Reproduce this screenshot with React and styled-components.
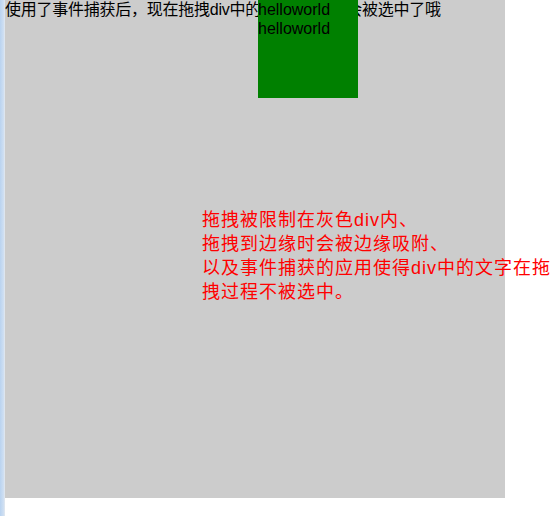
import React from 'react';
import styled, { createGlobalStyle } from 'styled-components';

const GlobalStyle = createGlobalStyle`
  html, body {
    margin: 0;
    padding: 0;
    background: #ffffff;
  }
  body {
    font-family: "Liberation Sans", "Noto Sans CJK SC", sans-serif;
    font-size: 16px;
    color: #000;
  }
`;

const Page = styled.div`
  display: flex;
  width: 553px;
  height: 516px;
  overflow: hidden;
`;

const SideStrip = styled.div`
  width: 5px;
  flex-shrink: 0;
  background: linear-gradient(to right, #b9d3f0, #cfdff2 70%, #e4e9ee);
`;

const Stage = styled.div`
  position: relative;
  width: 500px;
  height: 498px;
  background: #cccccc;
`;

const Title = styled.p`
  margin: 0;
  line-height: 19px;
  letter-spacing: -0.25px;
  white-space: nowrap;
`;

const DragBox = styled.div`
  position: absolute;
  left: 253px;
  top: 0;
  width: 100px;
  height: 98px;
  background: #008000;
  line-height: 19px;
  user-select: none;
`;

const Note = styled.div`
  position: absolute;
  left: 197px;
  top: 208px;
  width: 352px;
  color: #ff0000;
  font-size: 18px;
  line-height: 24px;
  letter-spacing: 1px;
`;

export default function App() {
  return (
    <>
      <GlobalStyle />
      <Page>
        <SideStrip />
        <Stage>
          <Title>使用了事件捕获后，现在拖拽div中的helloworld不会被选中了哦</Title>
          <DragBox>
            helloworld
            <br />
            helloworld
          </DragBox>
          <Note>
            拖拽被限制在灰色div内、
            <br />
            拖拽到边缘时会被边缘吸附、
            <br />
            以及事件捕获的应用使得div中的文字在拖拽过程不被选中。
          </Note>
        </Stage>
      </Page>
    </>
  );
}
